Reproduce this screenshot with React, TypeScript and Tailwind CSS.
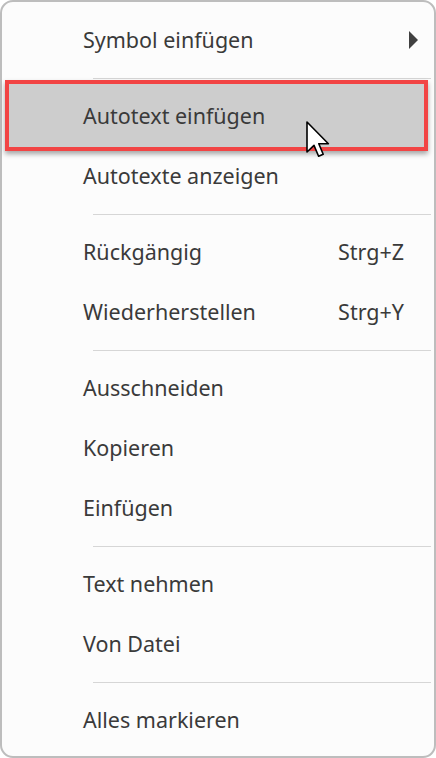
import React from "react";

type Item =
  | { kind: "item"; label: string; shortcut?: string; submenu?: boolean; active?: boolean }
  | { kind: "sep" };

const items: Item[] = [
  { kind: "item", label: "Symbol einfügen", submenu: true },
  { kind: "sep" },
  { kind: "item", label: "Autotext einfügen", active: true },
  { kind: "item", label: "Autotexte anzeigen" },
  { kind: "sep" },
  { kind: "item", label: "Rückgängig", shortcut: "Strg+Z" },
  { kind: "item", label: "Wiederherstellen", shortcut: "Strg+Y" },
  { kind: "sep" },
  { kind: "item", label: "Ausschneiden" },
  { kind: "item", label: "Kopieren" },
  { kind: "item", label: "Einfügen" },
  { kind: "sep" },
  { kind: "item", label: "Text nehmen" },
  { kind: "item", label: "Von Datei" },
  { kind: "sep" },
  { kind: "item", label: "Alles markieren" },
];

function Cursor() {
  return (
    <svg
      className="absolute left-[304px] top-[119px] w-[26px] h-[38px]"
      viewBox="0 0 13 19"
      fill="none"
    >
      <path
        d="M0.5 0.5 L0.5 15.5 L4 12.2 L6.3 17.6 L8.6 16.6 L6.4 11.4 L11.2 11.4 Z"
        fill="#ffffff"
        stroke="#000000"
        strokeWidth={0.8}
        strokeLinejoin="round"
      />
    </svg>
  );
}

export default function App() {
  return (
    <div className="w-[436px] h-[758px] bg-white font-['Noto_Sans','Open_Sans',sans-serif]">
      <div className="relative w-full h-full rounded-[13px] border-2 border-[#bdbdbd] bg-[#fcfcfc] pt-[8px]">
        {items.map((it, i) => {
          if (it.kind === "sep") {
            return (
              <div key={i} className="h-4 flex items-center pl-[91px] pr-[3px]">
                <div className="h-px w-full bg-[#d6d6d6]" />
              </div>
            );
          }
          if (it.active) {
            return (
              <div key={i} className="h-[60px] relative">
                <div className="absolute left-[3px] right-[6px] top-[-6px] bottom-[-5px] border-4 border-[#f24444] bg-[#cdcdcd] shadow-[0_3px_5px_rgba(0,0,0,0.35)]" />
                <div className="relative h-full flex items-center pl-[81px] text-[21.5px] text-[#3a3a3a]">
                  {it.label}
                </div>
              </div>
            );
          }
          return (
            <div
              key={i}
              className={`h-[60px] flex items-center justify-between pl-[81px] text-[21.5px] text-[#3a3a3a] ${
                it.submenu ? "pr-[16px]" : "pr-[30px]"
              }`}
            >
              <span>{it.label}</span>
              {it.shortcut && <span>{it.shortcut}</span>}
              {it.submenu && (
                <svg width="9" height="18" viewBox="0 0 9 18">
                  <path d="M0 0 L9 9 L0 18 Z" fill="#404040" />
                </svg>
              )}
            </div>
          );
        })}
        <Cursor />
      </div>
    </div>
  );
}
